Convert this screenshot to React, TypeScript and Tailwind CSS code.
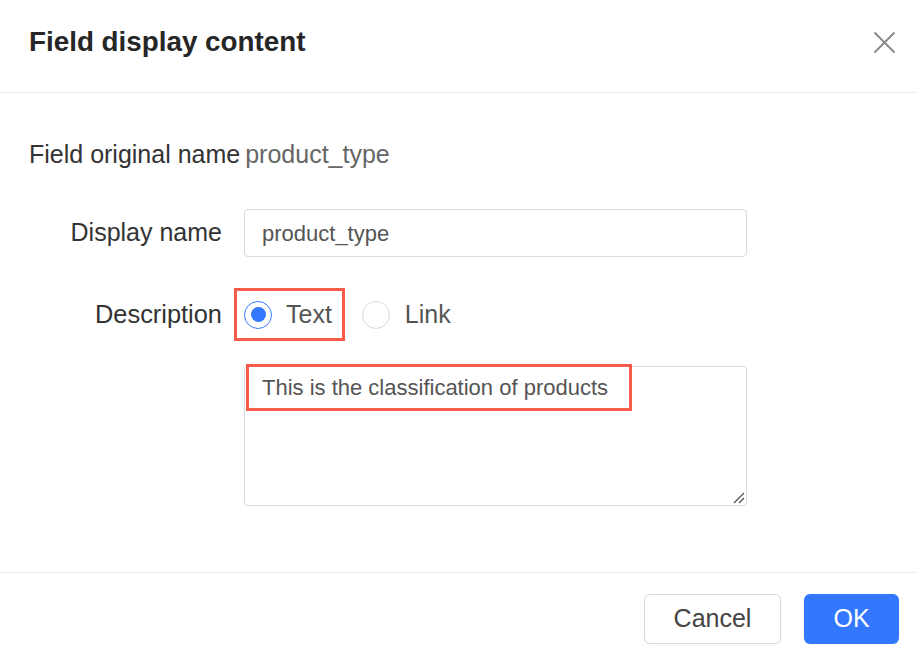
const font = "font-['Liberation_Sans',Arial,sans-serif]";

const Radio = ({ checked }: { checked?: boolean }) => {
  return (
    <span
      className={
        checked
          ? "flex h-[28px] w-[28px] items-center justify-center rounded-full border border-[#3a7bff] bg-white"
          : "flex h-[28px] w-[28px] items-center justify-center rounded-full border border-[#d9d9d9] bg-white"
      }
    >
      {checked && <span className="h-[15px] w-[15px] rounded-full bg-[#3377ff]"></span>}
    </span>
  );
};

const App = () => {
  return (
    <div className={`${font} h-[664px] w-[916px] overflow-hidden bg-white`}>
      {/* Header */}
      <div className="flex h-[93px] items-start justify-between border-b border-[#ececec] pl-[29px] pr-[20px] pt-[26px]">
        <div className="text-[27.8px] font-bold leading-[32px] text-[#262626]">Field display content</div>
        <svg className="mt-[5px]" width="23" height="23" viewBox="0 0 23 23" fill="none">
          <path d="M1.5 1.5 L21.5 21.5 M21.5 1.5 L1.5 21.5" stroke="#8a8a8a" strokeWidth="2" />
        </svg>
      </div>

      {/* Body */}
      <div className="flex h-[479px] flex-col pt-[44px]">
        <div className="flex items-center pl-[29px] text-[25px] leading-[34px]">
          <span className="text-[#333]">Field original name</span>
          <span className="ml-[5px] text-[#666]">product_type</span>
        </div>

        <div className="mt-[38px] flex items-center">
          <div className="w-[222px] text-right text-[25px] text-[#333]">Display name</div>
          <div className="ml-[22px] flex h-[48px] w-[503px] items-center rounded-[4px] border border-[#d9d9d9] pl-[17px] text-[22px] text-[#555]">
            product_type
          </div>
        </div>

        <div className="mt-[31px] flex items-center">
          <div className="w-[222px] text-right text-[25.4px] text-[#333]">Description</div>
          <div className="ml-[12px] flex items-center">
            <div className="flex h-[53px] items-center border-[3px] border-[#f65a4b] pl-[7px] pr-[10px]">
              <Radio checked />
              <span className="ml-[14px] text-[25px] text-[#555]">Text</span>
            </div>
            <div className="ml-[17px] flex items-center">
              <Radio />
              <span className="ml-[15px] text-[25px] text-[#555]">Link</span>
            </div>
          </div>
        </div>

        <div className="relative ml-[244px] mt-[25px] h-[140px] w-[503px] rounded-[4px] border border-[#d9d9d9] pl-[17px] pt-[7px] text-[22px] leading-[28px] text-[#555]">
          This is the classification of products
          <div className="absolute left-[1px] top-[-3px] h-[47px] w-[386px] border-[3px] border-[#f65a4b]"></div>
          <svg className="absolute bottom-[1px] right-[1px]" width="14" height="14" viewBox="0 0 14 14">
            <path d="M13 3 L3 13 M13 8 L8 13" stroke="#555" strokeWidth="1.4" />
          </svg>
        </div>
      </div>

      {/* Footer */}
      <div className="flex justify-end gap-[23px] border-t border-[#ececec] pr-[17px] pt-[21px]">
        <button className="h-[50px] w-[137px] rounded-[6px] border border-[#d9d9d9] bg-white text-[25px] text-[#444] shadow-[0_1px_2px_rgba(0,0,0,0.04)]">
          Cancel
        </button>
        <button className="h-[50px] w-[95px] rounded-[6px] bg-[#3377ff] text-[25px] text-white">OK</button>
      </div>
    </div>
  );
};

export default App;
